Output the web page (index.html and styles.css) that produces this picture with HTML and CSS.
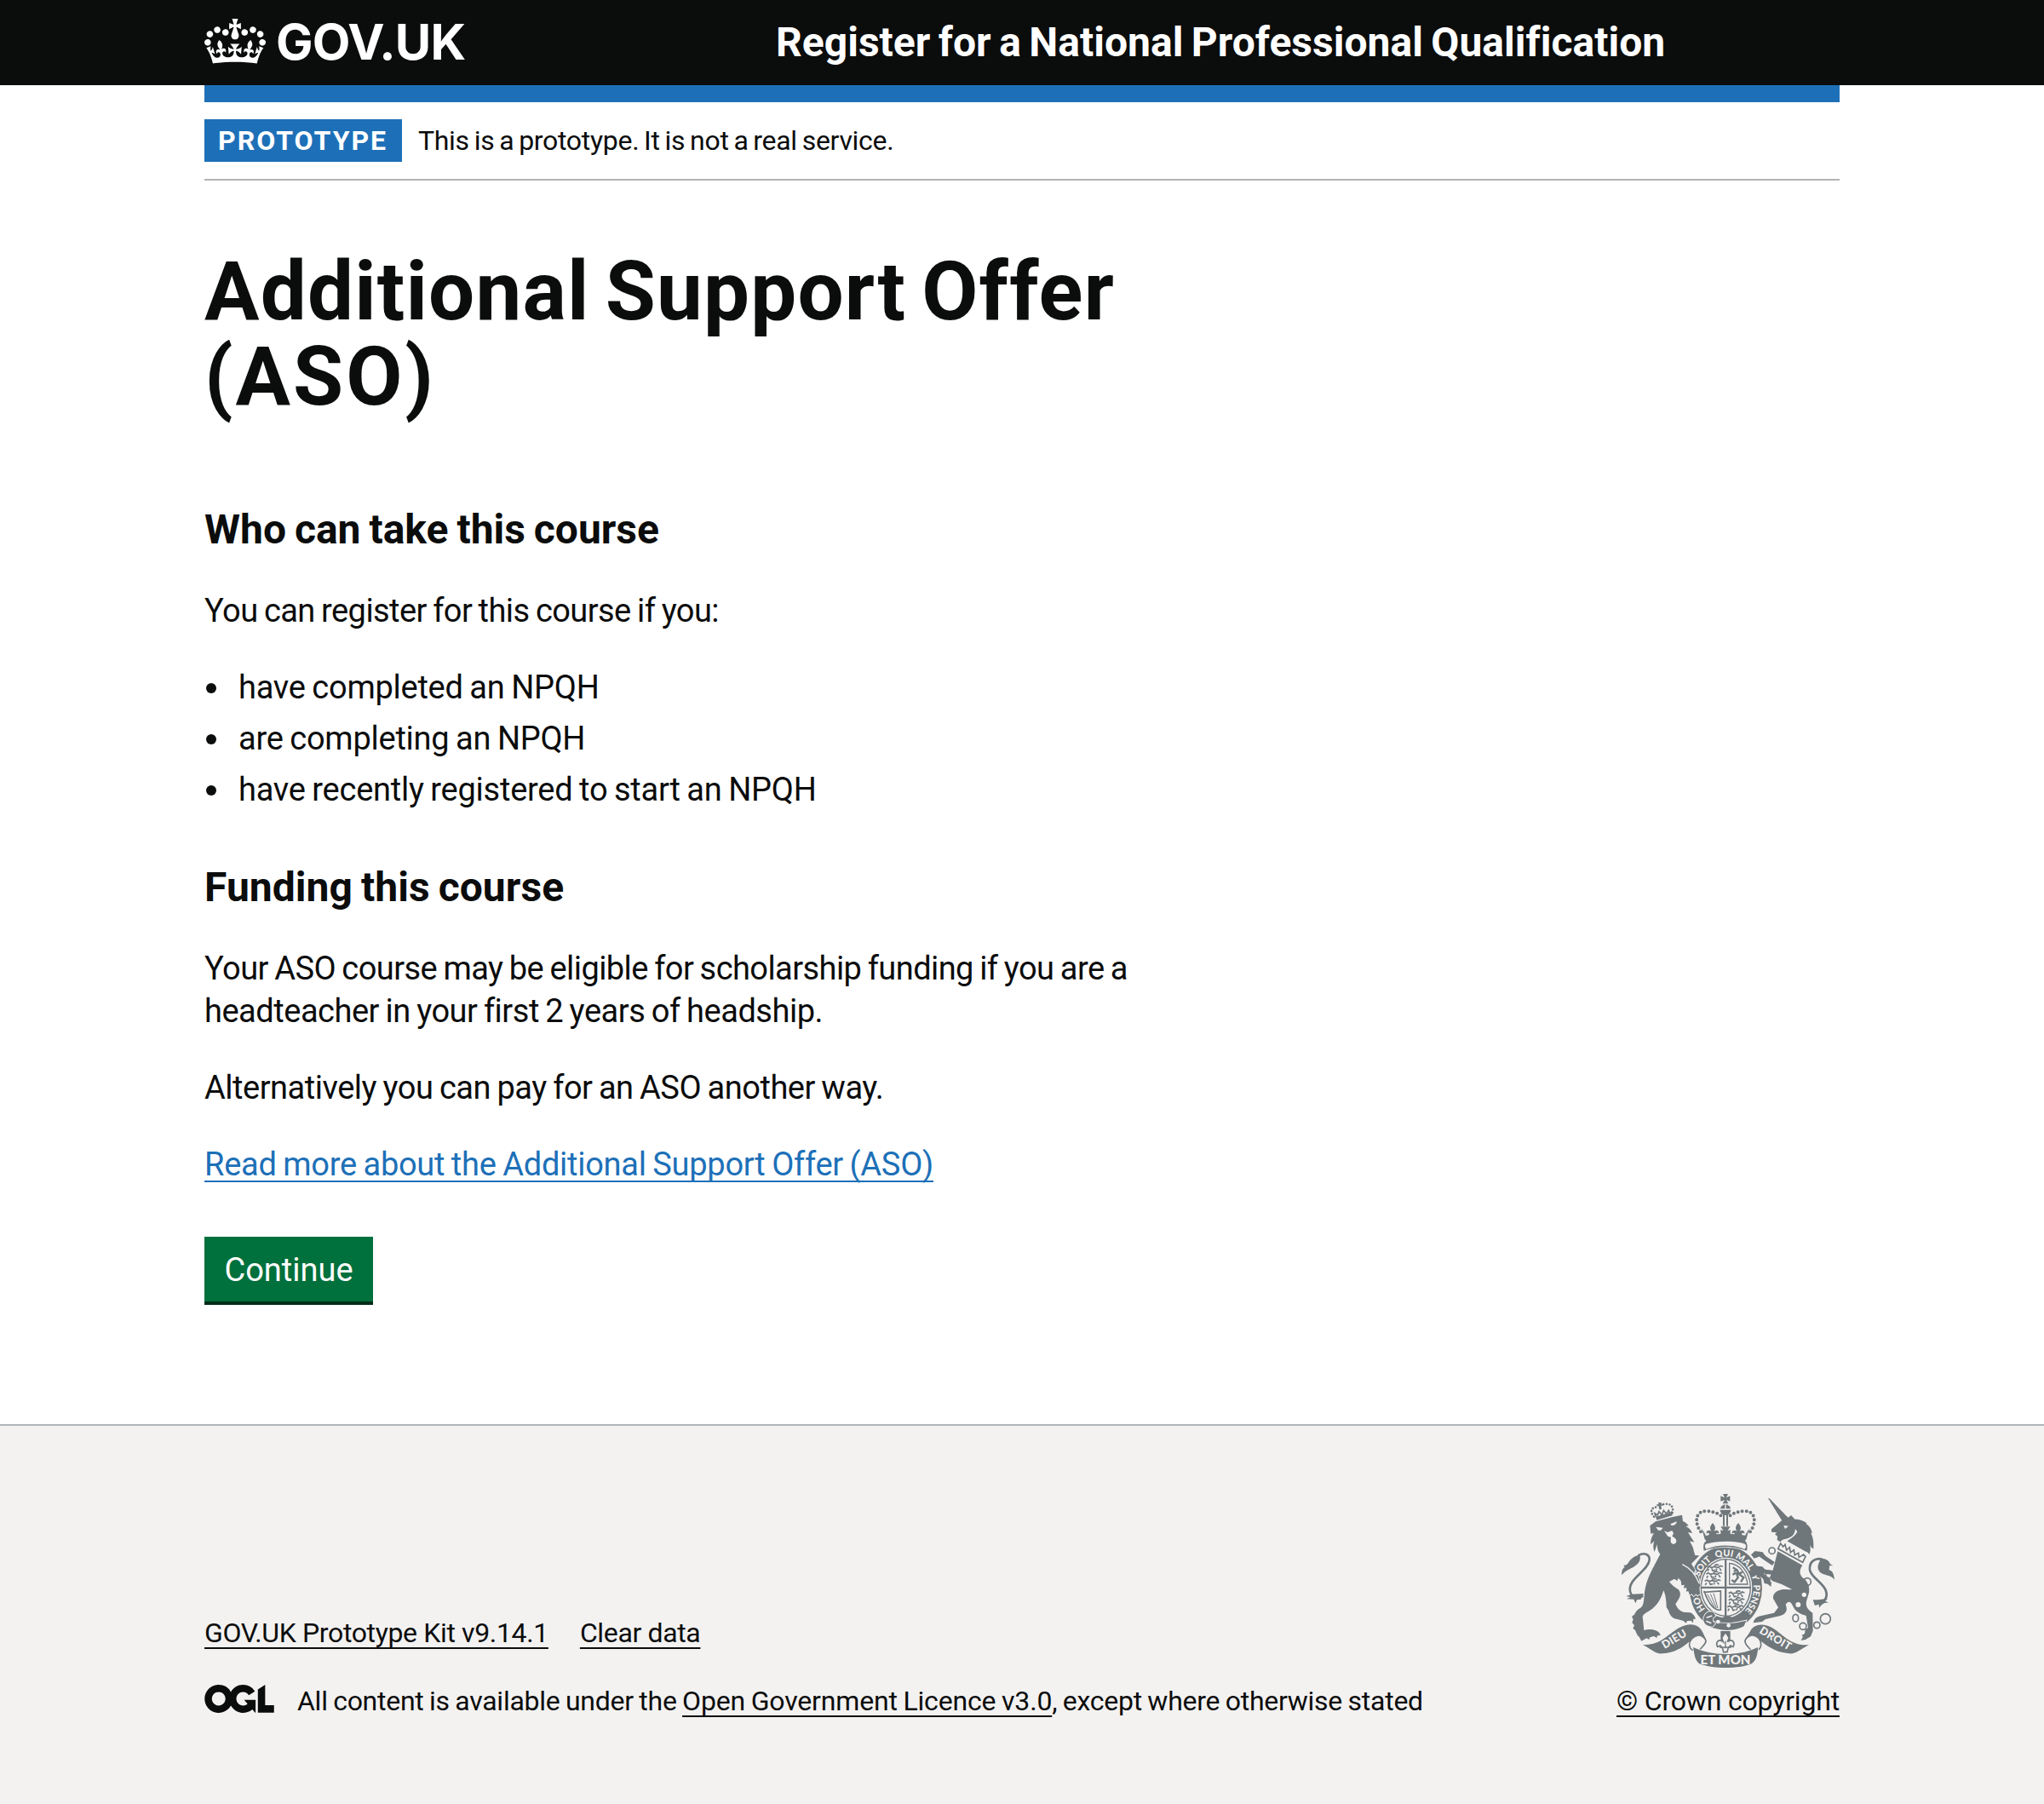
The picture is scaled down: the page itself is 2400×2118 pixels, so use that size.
FILE: index.html
```html
<!DOCTYPE html>
<html lang="en">
<head>
<meta charset="utf-8">
<title>Additional Support Offer (ASO)</title>
<link rel="stylesheet" href="styles.css">
</head>
<body>
<header class="header">
  <div class="container header-inner">
    <a class="logo" href="#">
      <svg class="crown" viewBox="0 0 132 97" aria-hidden="true"><path fill="currentColor" fill-rule="evenodd" d="M25 30.2c3.5 1.5 7.7-.2 9.1-3.7 1.5-3.6-.2-7.8-3.9-9.2-3.6-1.4-7.6.3-9.1 3.9-1.4 3.5.3 7.5 3.9 9zM9 39.5c3.6 1.5 7.8-.2 9.2-3.7 1.5-3.6-.2-7.8-3.9-9.1-3.6-1.5-7.6.2-9.1 3.8-1.4 3.5.3 7.5 3.8 9zM4.4 57.2c3.5 1.5 7.7-.2 9.1-3.8 1.5-3.6-.2-7.7-3.9-9.1-3.5-1.5-7.6.3-9.1 3.8-1.4 3.5.3 7.6 3.9 9.1zm38.3-21.4c3.5 1.5 7.7-.2 9.1-3.8 1.5-3.6-.2-7.7-3.9-9.1-3.6-1.5-7.6.3-9.1 3.8-1.3 3.6.4 7.7 3.9 9.1zm64.4-5.6c-3.6 1.5-7.8-.2-9.1-3.7-1.5-3.6.2-7.8 3.8-9.2 3.6-1.4 7.7.3 9.2 3.9 1.3 3.5-.4 7.5-3.9 9zm15.9 9.3c-3.6 1.5-7.7-.2-9.1-3.7-1.5-3.6.2-7.8 3.7-9.1 3.6-1.5 7.7.2 9.2 3.8 1.5 3.5-.3 7.5-3.8 9zm4.7 17.7c-3.6 1.5-7.8-.2-9.2-3.8-1.5-3.6.2-7.7 3.9-9.1 3.6-1.5 7.7.3 9.2 3.8 1.3 3.5-.4 7.6-3.9 9.1zM89.3 35.8c-3.6 1.5-7.8-.2-9.2-3.8-1.4-3.6.2-7.7 3.9-9.1 3.6-1.5 7.7.3 9.2 3.8 1.4 3.6-.3 7.7-3.9 9.1zM69.7 17.7l8.9 4.7V9.3l-8.9 2.8c-.2-.3-.5-.6-.9-.9L72.4 0H59.6l3.5 11.2c-.3.3-.6.5-.9.9l-8.8-2.8v13.1l8.8-4.7c.3.3.6.7.9.9l-5 15.4v.1c-.2.8-.4 1.6-.4 2.4 0 4.1 3.1 7.5 7 8.1h.2c.3 0 .7.1 1 .1.4 0 .7 0 1-.1h.2c4-.6 7.1-4.1 7.1-8.1 0-.8-.1-1.7-.4-2.4V34l-5.1-15.4c.4-.2.7-.6 1-.9zM66 92.8c16.9 0 32.8 1.1 47.1 3.2 4-16.9 8.9-26.7 14-33.5l-9.6-3.4c1 4.9 1.1 7.2 0 10.2-1.5-1.4-3-4.3-4.2-8.7L108.6 76c2.8-2 5-3.2 7.5-3.3-4.4 9.4-10 11.9-13.6 11.2-4.3-.8-6.3-4.6-5.6-7.9 1-4.7 5.7-5.9 8-.5 4.3-8.7-3-11.4-7.6-8.8 7.1-7.2 7.9-13.5 2.1-21.1-8 6.1-8.1 12.3-4.5 20.8-4.7-5.4-12.1-2.5-9.5 6.2 3.4-5.2 7.9-2 7.2 3.1-.6 4.3-6.4 7.8-13.5 7.2-10.3-.9-10.9-8-11.2-13.8 2.5-.5 7.1 1.8 11 7.3L80.2 60c-4.1 4.4-8 5.3-12.3 5.4 1.4-4.4 8-11.6 8-11.6H55.5s6.4 7.2 7.9 11.6c-4.2-.1-8-1-12.3-5.4l1.4 16.4c3.9-5.5 8.5-7.7 10.9-7.3-.3 5.8-.9 12.8-11.1 13.8-7.2.6-12.9-2.9-13.5-7.2-.7-5 3.8-8.3 7.1-3.1 2.7-8.7-4.6-11.6-9.4-6.2 3.7-8.5 3.6-14.7-4.6-20.8-5.8 7.6-5 13.9 2.2 21.1-4.7-2.6-11.9.1-7.7 8.8 2.3-5.5 7.1-4.2 8.1.5.7 3.3-1.3 7.1-5.7 7.9-3.5.7-9-1.8-13.5-11.2 2.5.1 4.7 1.3 7.5 3.3l-4.7-15.4c-1.2 4.4-2.7 7.2-4.3 8.7-1.1-3-.9-5.3 0-10.2l-9.5 3.4c5 6.9 9.9 16.7 14 33.5 14.8-2.1 30.8-3.2 47.7-3.2z"/></svg>
      <span class="logo-text">GOV.UK</span>
    </a>
    <a class="service-name" href="#">Register for a National Professional Qualification</a>
  </div>
</header>
<div class="container">
  <div class="blue-bar"></div>
  <div class="phase-banner">
    <strong class="tag">PROTOTYPE</strong>
    <span class="phase-text">This is a prototype. It is not a real service.</span>
  </div>
  <main class="main">
    <h1 class="title"><span class="title-line">Additional Support Offer</span> <span class="title-line title-line-short">(ASO)</span></h1>
    <h2 class="heading">Who can take this course</h2>
    <p class="body tight">You can register for this course if you:</p>
    <ul class="list">
      <li>have completed an NPQH</li>
      <li>are completing an NPQH</li>
      <li>have recently registered to start an NPQH</li>
    </ul>
    <h2 class="heading funding">Funding this course</h2>
    <p class="body tight">Your ASO course may be eligible for scholarship funding if you are a <span class="medium">headteacher in your first 2 years of headship.</span></p>
    <p class="body medium">Alternatively you can pay for an ASO another way.</p>
    <p class="body"><a class="link" href="#">Read more about the Additional Support Offer (ASO)</a></p>
    <button class="button" type="button">Continue</button>
  </main>
</div>
<footer class="footer">
  <div class="container footer-inner">
    <div class="meta">
      <div class="footer-links"><a href="#">GOV.UK Prototype Kit v9.14.1</a><a href="#">Clear data</a></div>
      <div class="licence">
        <svg class="ogl" viewBox="0 0 483.2 195.7" aria-hidden="true"><path fill="currentColor" d="M421.5 142.8V.1l-50.7 32.3v161.1h112.4v-50.7zm-122.3-9.6A47.12 47.12 0 0 1 221 97.8c0-26 21.1-47.1 47.1-47.1 16.7 0 31.4 8.7 39.7 21.8l42.7-27.2A97.63 97.63 0 0 0 268.1 0c-36.5 0-68.3 20.1-85.1 49.7A98 98 0 0 0 97.8 0C43.9 0 0 43.9 0 97.8s43.9 97.8 97.8 97.8c36.5 0 68.3-20.1 85.1-49.7a97.76 97.76 0 0 0 149.6 25.4l19.4 22.2h3v-87.8h-80l24.3 27.5zM97.8 145c-26 0-47.1-21.1-47.1-47.1s21.1-47.1 47.1-47.1 47.1 21.1 47.1 47.1S123.8 145 97.8 145"/></svg>
        <span>All content is available under the <a class="ogl-link" href="#">Open Government Licence v3.0</a>, except where otherwise stated</span>
      </div>
    </div>
    <div class="copyright">
      <svg class="arms" viewBox="72 72 750 612" aria-hidden="true">
        <defs>
          <path id="garter" pathLength="360" d="M439 513A98 111 0 0 1 439 291A98 111 0 0 1 439 513"/>
          <g id="fleur"><path d="M0-32c10 12 12 20 4 30 10-8 20-2 18 8-4-4-8-4-10 0l6 14h-36l6-14c-2-4-6-4-10 0-2-10 8-16 18-8-8-10-6-18 4-30z"/></g>
          <g id="lions" fill="none" stroke-width="5"><path d="M2 8l8-4 6 5 12-3 14 3 8-6 8 3M8 14l-4 8M18 12l4 8 8-2M36 12l-2 8M46 12l6 8M28 3l6-4 10 2"/></g>
        </defs>
        <!-- garter and shield -->
        <ellipse class="dark" cx="439" cy="403" rx="128" ry="148"/>
        <ellipse class="dark light-ring" cx="439" cy="402" rx="91" ry="104"/>
        <ellipse class="light" cx="439" cy="402" rx="85" ry="98"/>
        <g class="dark stroke">
          <path d="M435 303h7v205h-7zM350 398h178v7H350z"/>
          <use href="#lions" x="371" y="322"/><use href="#lions" x="368" y="346"/><use href="#lions" x="363" y="371"/>
          <use href="#lions" x="447" y="414"/><use href="#lions" x="447" y="438"/><use href="#lions" x="443" y="462"/>
          <path class="line" stroke-width="4" d="M452 316c36 4 58 34 64 74h-64z"/>
          <path class="line" stroke-width="7" d="M464 331l15 9 6 14 17 12-10 16M463 356l14-7 5 18-12 15-10-7M484 354l14-7M478 340l-11 5"/>
          <path class="line" stroke-width="5" d="M363 418l58-4v66c-20 5-43-20-58-66z"/>
          <path class="line" stroke-width="3" d="M374 425l26 48M385 424l21 50M396 422l15 52"/>
          <path d="M428 508l10-8 20 3-6 12z"/>
        </g>
        <!-- lion -->
        <g class="dark">
          <path class="light-edge" d="M172 184L192 169L252 153L285 146L288 168C298 172 304 178 308 184L298 186C310 192 317 199 321 210L306 207C313 220 321 230 328 242L312 238C318 250 325 260 327 275L331 288L346 289L318 318C328 334 336 346 344 368L350 395L346 402L349 424L340 430L334 424L326 432L320 424L312 428L307 414L300 416L301 402L291 404L293 392L283 394L281 378L272 368L268 378L258 371L240 381C252 396 262 402 272 408C282 420 280 432 272 444L262 460C268 474 276 484 290 488L314 490C324 494 330 502 333 512L325 512L324 526L316 518L302 520L300 527L288 518L256 510C244 502 240 494 238 484L230 470C230 445 226 425 220 412L214 428C206 450 190 474 162 488C148 496 144 502 147 512L151 552C166 548 180 548 192 553C202 557 207 561 209 570L198 571L196 579L186 573L172 577L169 585L160 580L142 590L134 575C127 572 125 562 120 552L112 545L117 535L109 525L113 514L108 504L118 496C124 482 130 478 138 474C150 466 150 450 152 430C154 390 170 356 186 326L208 284C200 276 198 264 197 250L188 276C182 264 183 250 187 238L174 250C174 234 178 222 186 210L175 212Z"/>
          <path d="M72 358c1-20 5-24 11-28l-4-6c10-2 13-4 17-10 8-14 23-26 40-27 4 17-2 26-11 34-14 14-35 16-53 37z"/>
          <path class="line" stroke-width="8" d="M130 289c24-14 42-2 40 16-3 28-44 51-61 78-11 17-8 34-2 44 10 12 25 10 41 4"/>
          <path d="M88 432l20-7 42-2-10 20-14 2-5 12-6-14-25-1 13-6z"/>
        </g>
        <path class="light-line" stroke-width="4" d="M286 320c30 14 47 35 60 68"/>
        <g class="light">
          <path d="M193 188l24 3c-3 8-10 12-17 8zM244 178l22-9c0 11-10 15-18 14zM222 202l12 5 16-6 5 10-5 10c12 6 18 12 14 22-6 8-14 6-18 0-3-8 0-12 0-18l-11-4z"/>
        </g>
        <g class="garter-text">
          <text><textPath href="#garter" startOffset="59">HO</textPath></text>
          <text><textPath href="#garter" startOffset="131">SOIT</textPath></text>
          <text><textPath href="#garter" startOffset="177">QUI</textPath></text>
          <text><textPath href="#garter" startOffset="217">MAL</textPath></text>
          <text><textPath href="#garter" startOffset="251">Y</textPath></text>
          <text><textPath href="#garter" startOffset="292">PENSE</textPath></text>
        </g>
        <!-- belt and buckle -->
        <path class="light-edge dark" d="M362 510c45 21 97 22 149 8l-8 20c-42 22-95 16-137-6z"/>
        <path class="light-edge dark" d="M361 510c5-20 18-27 34-22l8 14-10 8v10l9 9-9 10c-22-1-34-12-32-29z"/>
        <path class="light-line" stroke-width="5" d="M371 508l20-7M370 520l18 7"/>
        <circle class="light" cx="412" cy="522" r="7"/><circle class="light" cx="449" cy="535" r="7"/>
        <!-- lion's crown -->
        <g class="dark">
          <path d="M192 152l4 12 54-16v-13z"/>
          <path class="line" stroke-width="5" d="M194 154l-5-14 10 6 5-12 10 12 6-16 10 12 8-12 4 12 6-6 0 12"/>
          <path class="line beads" d="M186 152c-16-20-10-34 16-34M251 138c6-20-6-36-34-29"/>
          <path d="M202 101l6 2 5-1-1 6 5-1-1 7-5-2 2 14-8 1-3-14-5 3-1-8 6 1z"/>
        </g>
        <!-- central crown -->
        <g class="dark">
          <path class="light-edge" d="M362 272c-4-16-1-28 8-35-5-10-12-30-18-45h172c-5 15-12 35-17 45 9 8 9 21 6 35-42-18-108-18-151 0z"/>
          <path class="light" d="M342 182h192v14l-16 24c-50-10-105-10-156 0l-16-24z"/>
          <path class="light" d="M369 248c40-12 98-12 138 0 5 5 4 14-2 18-42-17-94-17-135 0-5-7-6-14-1-18z"/>
          <path class="line beads big" d="M351 205c-24-32-19-74 21-73 24 2 38 8 50 16M525 205c24-32 19-74-21-73-24 2-38 8-50 16"/>
          <use href="#fleur" x="393" y="206"/><use href="#fleur" x="483" y="206"/>
          <path d="M421 187h34l-10 15 10-4v22l-12-5 6 13h-22l6-13-12 5v-22l10 4zM354 193l12 20 7 16-7 6zM522 193l-12 20-7 16 7 6zM429 145h6v40h-6zM441 145h6v40h-6z"/>
          <circle cx="438" cy="128" r="19"/>
          <path d="M429 72h18l-6 13 13-6v19l-13-5 7 13h-20l7-13-14 5V79l14 6z"/>
          <path class="light-line" stroke-width="4" d="M418 126h40M438 109v16"/>
        </g>
        <!-- unicorn -->
        <g class="dark">
          <path d="M588 87l5 1 66 68-5 14-14 1z"/>
          <path d="M669 147l14 14c22 0 35 8 42 15l-4 1c14 8 20 20 22 32l-4 1c8 15 10 32 9 55-8-4-10-8-12-14 1 12 3 23-3 34-3-6-7-10-12-10l-66-37c16-11 29-18 36-33l-7-10c-2 20-12 30-33 35-14 2-16 7-20 11l-11-7 1-13-9-7 7-6-19-2v-10l44-37 17-5z"/>
          <path d="M622 274l87 49c-14 20-10 38 8 49 14 14 18 34 15 48l-9 30c-3 20 5 29 22 41l1 63-8 20-18 11-16 3 7-14-5-4 11-6 2-15 10-6-7-42c-23-7-38-15-46-33-8-19-17-20-26-7l3 11c2 15-5 24-22 29l-52 12-12 9-31 4c3-12 9-20 25-24l48-11 15-19-18-32c-1-20 14-29 35-32 17-1 23 2 31 0l-36-18-32-11c-14-10-8-20-2-27z"/>
          <path class="line" stroke-width="15" d="M614 350l-35-4-24-10 14 24 24 20M607 318l-30-20-18-14-24 8"/>
          <path d="M528 286l14-13 27 4 10 15-22-4-9 8-13-2zM543 344l10-18 15 2 8 9-14 8-3 13-12 3zM571 373l14-8 15 19-2 15-11-10-12-2z"/>
          <path class="line" stroke-width="8" d="M779 302c-24-7-47 8-44 37 4 28 48 45 57 75 8 26-9 41-28 39"/>
          <path d="M760 302c25-9 44 4 47 17l10 6-12-1-2 16c10 1 17 12 19 34-14-22-48-12-57-36-4-12 2-25 7-33zM746 445c24 0 39-4 52-5l-8 9 13 8c-15-4-23 0-35 16l-1-12-14 4z"/>
        </g>
        <path class="light" d="M643 183l17 2-12 10z"/>
        <path class="light dark-stroke" d="M632 246l9 12 7-8 5 20 11-10 3 18 12-9 3 18 13-7 2 15 16-10 7 7-10 21-87-48z"/>
        <g class="rings">
          <circle cx="602" cy="272" r="11"/><circle cx="592" cy="356" r="12"/><circle cx="726" cy="381" r="13"/>
          <ellipse cx="685" cy="509" rx="10" ry="13"/><circle cx="711" cy="538" r="12"/><circle cx="760" cy="534" r="11"/><circle cx="790" cy="512" r="18"/>
        </g>
        <g class="light"><circle cx="715" cy="427" r="8"/><circle cx="694" cy="462" r="9"/></g>
        <!-- motto ribbon -->
        <g class="dark">
          <path class="light-edge" d="M146 602c60 6 84-32 128-58 39-22 69-12 80 9 8 14 13 26 16 33-18-12-33-15-46-5-25 20-50 48-108 53-25 2-38-15-70-32z"/>
          <path class="light-edge" d="M732 603c-60 6-88-33-126-58-39-22-69-12-80 9-8 14-18 26-22 38 18-14 35-18 52-6 25 18 52 43 106 48 25 2 40-15 70-31z"/>
          <path class="light dark-stroke" d="M344 569c-20 4-34 18-33 36 2 12 7 17 15 18h20c6-10 22-20 23-33-2-10-14-18-25-21zM532 569c20 4 32 18 31 36-2 12-7 17-15 18h-20c-6-10-22-20-21-33 2-10 14-18 25-21z"/>
          <path class="light-edge" d="M324 612c68 32 162 32 229 0-3 26-5 45-23 58-42 19-139 19-184 0-17-14-17-34-22-58z"/>
          <path d="M421 555h34v33h-34z"/>
          <path class="light dark-stroke" d="M438 559l-13 19 5 15c-16-14-28 2-20 17l10-4 8 10 3 13h13l3-13 8-10 10 4c8-15-4-31-20-17l6-15z"/>
          <path class="line" stroke-width="4" d="M438 590v26M417 612h42"/>
        </g>
        <g class="ribbon-text">
          <text transform="translate(264 594) rotate(-31)">DIEU</text>
          <text class="motto-large" x="438" y="673">ET MON</text>
          <text transform="translate(608 592) rotate(31)">DROIT</text>
        </g>
      </svg>
      <a href="#">© Crown copyright</a>
    </div>
  </div>
</footer>
</body>
</html>
```
FILE: styles.css
```css
* { box-sizing: border-box; }
body {
  margin: 0;
  background: #fff;
  color: #0b0c0c;
  font: 400 38px/50px Roboto, "Liberation Sans", sans-serif;
  display: flex;
  flex-direction: column;
  min-height: 2118px;
}
.container { width: 1920px; margin: 0 auto; }
.header { background: #0b0c0c; color: #fff; height: 100px; }
.header-inner { display: flex; align-items: center; height: 100px; }
.header a { color: inherit; text-decoration: none; }
.logo { display: flex; align-items: center; gap: 12px; width: 671px; padding-bottom: 4px; }
.crown { width: 72px; height: 53px; display: block; }
.logo-text { font: 700 58px/60px Inter, Roboto, sans-serif; letter-spacing: -0.8px; padding-top: 2px; }
.service-name { font-weight: 700; font-size: 48px; line-height: 60px; letter-spacing: 0.02px; word-spacing: -2.5px; white-space: nowrap; }

.blue-bar { height: 20px; background: #1d70b8; }
.phase-banner { display: flex; align-items: center; gap: 19px; padding: 20px 0; border-bottom: 2px solid #b1b4b6; font-size: 32px; line-height: 40px; }
.tag { background: #1d70b8; color: #fff; padding: 5px 14px 5px 16px; width: 232px; letter-spacing: 2px; font-weight: 700; white-space: nowrap; }
.phase-text { letter-spacing: -0.3px; word-spacing: -1.8px; }

.main { width: 1100px; padding: 80px 0 144px; }
.title { margin: 0 0 100px; font-size: 96px; line-height: 100px; font-weight: 700; }
.title-line { display: block; letter-spacing: 1.2px; word-spacing: -7px; white-space: nowrap; }
.title-line-short { letter-spacing: 3px; }
.heading { margin: 0 0 40px; font-size: 48px; line-height: 60px; font-weight: 700; letter-spacing: 0; word-spacing: -2px; }
.funding { letter-spacing: 0.05px; }
.body { margin: 0 0 40px; letter-spacing: -0.27px; word-spacing: -1.5px; }
.tight { letter-spacing: -0.57px; }
.medium { letter-spacing: -0.48px; }
.list { list-style: none; margin: 0 0 60px; padding: 0; letter-spacing: -0.25px; word-spacing: -1.5px; display: flex; flex-direction: column; gap: 10px; }
.list li { display: flex; align-items: center; }
.list li::before { content: ""; width: 12px; height: 12px; margin: 2px 26px 0 2px; border-radius: 50%; background: currentColor; }
a { color: inherit; text-decoration-line: underline; text-decoration-thickness: 2px; text-underline-offset: 6px; text-decoration-skip-ink: none; }
.link { color: #1d70b8; }
.button { display: block; margin: 60px 0 0; width: 198px; height: 76px; padding: 1px 0 0; border: 0; background: #00703c; color: #fff; box-shadow: 0 4px 0 #002d18; font: inherit; }

.footer { flex: 1; background: #f3f2f1; border-top: 2px solid #b1b4b6; padding-top: 80px; font-size: 32px; line-height: 40px; }
.footer-inner { display: flex; justify-content: space-between; align-items: flex-end; }
.footer-links { display: flex; gap: 37px; margin-bottom: 40px; letter-spacing: -0.36px; }
.licence { display: flex; align-items: center; gap: 27px; letter-spacing: -0.26px; word-spacing: -1.2px; white-space: nowrap; }
.ogl { width: 82px; height: 33px; margin-bottom: 5px; }
.ogl-link { letter-spacing: -0.16px; }
.copyright { width: 262px; display: flex; flex-direction: column; align-items: center; gap: 19px; letter-spacing: -0.18px; white-space: nowrap; }
.arms { display: block; width: 250px; height: 204px; }

.arms { --ink: #6f777b; --paper: #f3f2f1; }
.arms .dark { fill: var(--ink); }
.arms .light { fill: var(--paper); }
.arms .line { fill: none; stroke: var(--ink); }
.arms .stroke { stroke: var(--ink); stroke-width: 0; }
.arms .light-line { fill: none; stroke: var(--paper); }
.arms .light-edge { stroke: var(--paper); stroke-width: 5; paint-order: stroke; }
.arms .light-ring { stroke: var(--paper); stroke-width: 4; }
.arms .dark-stroke { stroke: var(--ink); stroke-width: 5; }
.arms .beads { stroke-width: 8; stroke-linecap: round; stroke-dasharray: 0 11; }
.arms .big { stroke-width: 12; stroke-dasharray: 0 15; }
.arms .rings { fill: none; stroke: var(--ink); stroke-width: 5; }
.arms .garter-text { fill: var(--paper); font: 900 32px Lato, sans-serif; text-anchor: middle; letter-spacing: 0; word-spacing: 0; }
.arms .ribbon-text { fill: var(--paper); font: 900 38px Lato, sans-serif; text-anchor: middle; letter-spacing: 1px; }
.arms .motto-large { font-size: 45px; letter-spacing: 0; }
```
